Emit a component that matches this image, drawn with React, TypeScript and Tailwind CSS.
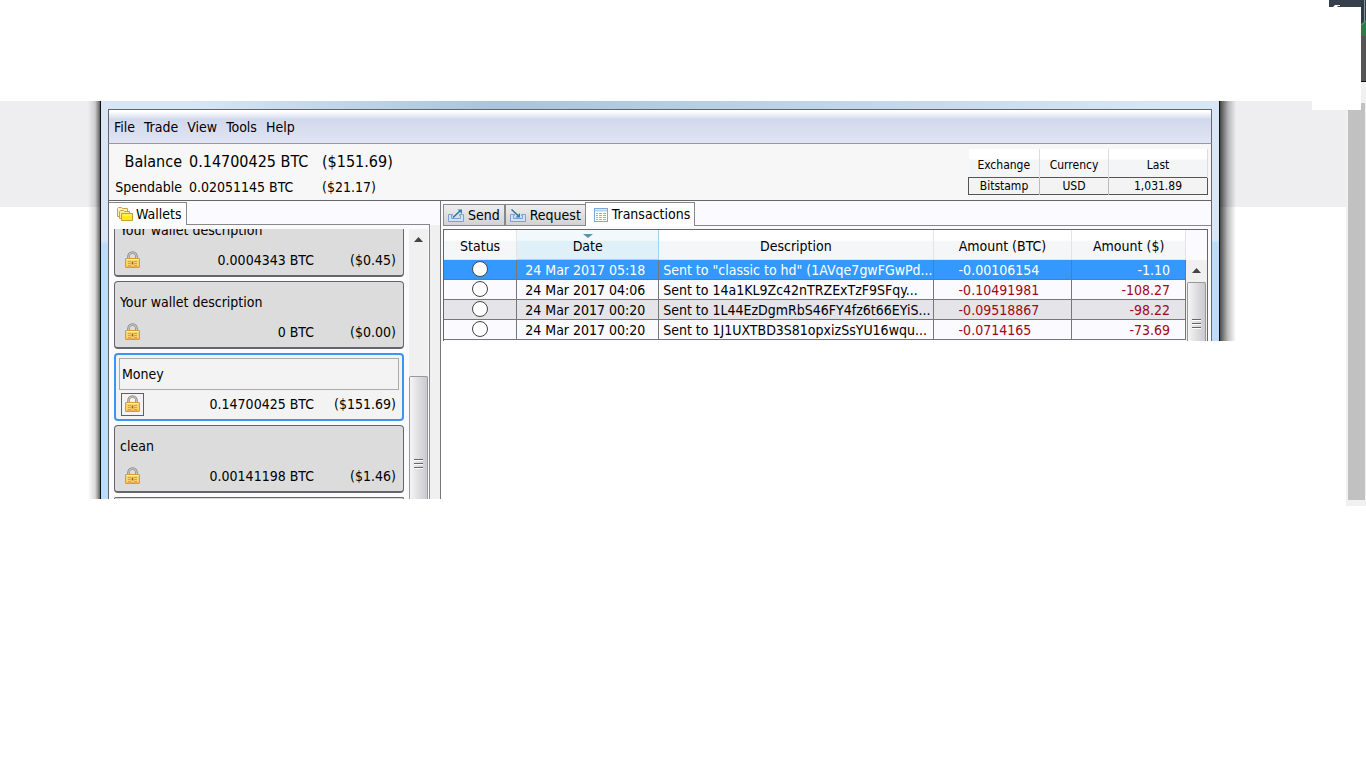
import type { ReactNode } from "react";

const menus = ["File", "Trade", "View", "Tools", "Help"];

const transactions = [
  { date: "24 Mar 2017 05:18", text: 'Sent to "classic to hd" (1AVqe7gwFGwPd...', btc: "-0.00106154", usd: "-1.10" },
  { date: "24 Mar 2017 04:06", text: "Sent to 14a1KL9Zc42nTRZExTzF9SFqy...", btc: "-0.10491981", usd: "-108.27" },
  { date: "24 Mar 2017 00:20", text: "Sent to 1L44EzDgmRbS46FY4fz6t66EYiS...", btc: "-0.09518867", usd: "-98.22" },
  { date: "24 Mar 2017 00:20", text: "Sent to 1J1UXTBD3S81opxizSsYU16wqu...", btc: "-0.0714165", usd: "-73.69" },
];

function LockIcon() {
  return (
    <svg width="16" height="18" viewBox="0 0 16 18" className="shrink-0">
      <path d="M3.500 9V5.500a4 4 0 0 1 8 0V9" fill="none" stroke="#8d8d8d" strokeWidth="2.600" />
      <path d="M3.500 9V5.500a4 4 0 0 1 8 0V9" fill="none" stroke="#cdcdcd" strokeWidth="1" />
      <rect x=".5" y="7.500" width="14" height="9" rx=".5" fill="#f8d272" stroke="#d99a3a" />
      <path d="M1.500 8.500h12" stroke="#fdf0b8" />
      <path d="M1.500 15.500h12" stroke="#f3b04a" />
      <path d="M3 10.500h3M9 10.500h3M3 12.500h3M9 12.500h3M3 14.500h3M9 14.500h3" stroke="#e79c34" />
      <path d="M7.500 10.500v3" stroke="#a8641c" strokeWidth="1.600" />
    </svg>
  );
}

function WalletsIcon() {
  return (
    <svg width="16" height="14" viewBox="0 0 16 14" className="shrink-0">
      <path d="M.5 9.500V1.500l1-1h3l1 1h5v8z" fill="#fdf3c4" stroke="#c9a04a" />
      <path d="M2.500 11.500V4.500l1-1h3l1 1h5v7z" fill="#fbeb9b" stroke="#c9a04a" />
      <path d="M4.500 13.500V6.500h11v7z" fill="#ffea1e" stroke="#cf9f20" />
      <path d="M5.500 8h9" stroke="#fff79a" />
    </svg>
  );
}

function SendIcon() {
  return (
    <svg width="16" height="13" viewBox="0 0 16 13" className="shrink-0">
      <path d="M.5 5.500h4v1h-1v3h9v-3h-1v-1h4v7H.5z" fill="#d3e2f5" stroke="#7f9fd2" />
      <path d="M5 8.500 12 2" stroke="#2a6f9e" strokeWidth="1.400" />
      <path d="M9.500 .5H14V5z" fill="#2a86ac" />
    </svg>
  );
}

function RequestIcon() {
  return (
    <svg width="16" height="13" viewBox="0 0 16 13" className="shrink-0">
      <path d="M.5 5.500h4v1h-1v3h9v-3h-1v-1h4v7H.5z" fill="#d3e2f5" stroke="#7f9fd2" />
      <path d="M1.500 .5l7 6.500" stroke="#2a6f9e" strokeWidth="1.400" />
      <path d="M10 4v4.500H5.500z" fill="#2a86ac" />
    </svg>
  );
}

function TransactionsIcon() {
  return (
    <svg width="14" height="14" viewBox="0 0 14 14" className="shrink-0">
      <rect x=".5" y=".5" width="13" height="13" fill="#fff" stroke="#7fa6dc" />
      <path d="M1 2.500h12" stroke="#b5cff0" strokeWidth="2" />
      <path d="M2 5.500h2M5 5.500h3M9 5.500h3M2 7.500h2M5 7.500h3M9 7.500h3M2 9.500h2M5 9.500h3M9 9.500h3M2 11.500h2M5 11.500h3M9 11.500h3" stroke="#8fb4e3" />
    </svg>
  );
}

function ScrollUp() {
  return (
    <button aria-label="Scroll up" className="flex h-5 w-full items-center justify-center">
      <svg width="9" height="5" viewBox="0 0 9 5">
        <path d="M4.500 0 9 5H0z" fill="#444" />
      </svg>
    </button>
  );
}

function Grip() {
  return (
    <svg width="9" height="10" viewBox="0 0 9 10">
      <path d="M0 .5h9M0 4.500h9M0 8.500h9" stroke="#666" />
      <path d="M0 1.500h9M0 5.500h9M0 9.500h9" stroke="#fff" />
    </svg>
  );
}

function Amounts({ btc, usd, children }: { btc: string; usd: string; children: ReactNode }) {
  return (
    <div className="mt-3 flex h-5 items-center">
      {children}
      <span className="flex-1 text-right">{btc} BTC</span>
      <span className="w-[82px] text-right">{usd}</span>
    </div>
  );
}

function WalletCard({ name, btc, usd }: { name: string; btc: string; usd: string }) {
  return (
    <div className="h-[68px] shrink-0 rounded-[4px] border border-b-2 border-[#666] bg-[#dcdcdc] pt-3 pr-[7px] pl-[5px]">
      <div className="h-4 leading-4">{name}</div>
      <Amounts btc={btc} usd={usd}>
        <span className="ml-[5px]">
          <LockIcon />
        </span>
      </Amounts>
    </div>
  );
}

function SidePanel() {
  return (
    <section className="flex h-[298px] w-[332px] shrink-0 flex-col border-r border-[#777] bg-[#fbfaff]">
      <div className="flex h-6 shrink-0 items-end pt-px">
        <button className="flex h-full items-center gap-[3px] border border-b-0 border-l-0 border-[#888] bg-white pr-1 pl-2 whitespace-nowrap">
          <WalletsIcon />
          Wallets
        </button>
        <div className="mr-[10px] h-px flex-1 bg-[#888]" />
      </div>
      <div className="flex min-h-0 flex-1">
        <div className="mt-1 flex min-w-0 flex-1 flex-col justify-end gap-1 overflow-hidden pl-[5px]">
          <WalletCard name="Your wallet description" btc="0.0004343" usd="($0.45)" />
          <WalletCard name="Your wallet description" btc="0" usd="($0.00)" />
          <div className="h-[68px] shrink-0 rounded-[4px] border-2 border-[#3d95f0] bg-[#f3f3f3] px-[3px] pt-[3px]">
            <input
              aria-label="Wallet description"
              defaultValue="Money"
              className="block h-8 w-full border border-[#aaa] bg-[#f3f3f3] pl-0.5"
            />
            <div className="mt-0.5 flex h-6 items-center pr-[3px] pl-0.5">
              <button aria-label="Lock wallet" className="flex size-[23px] items-center justify-center border border-[#2f6ba8] bg-[#f3f3f3]">
                <LockIcon />
              </button>
              <span className="flex-1 text-right">0.14700425 BTC</span>
              <span className="w-[82px] text-right">($151.69)</span>
            </div>
          </div>
          <WalletCard name="clean" btc="0.00141198" usd="($1.46)" />
          <div className="h-0.5 shrink-0 rounded-t-[4px] border border-b-0 border-[#666] bg-[#dcdcdc]" />
        </div>
        <div className="mt-1 ml-[5px] flex w-[19px] flex-col bg-[#f0f0f0]">
          <ScrollUp />
          <div className="mt-auto flex h-[123px] flex-col items-center rounded-t-[2px] border border-b-0 border-[#999] bg-linear-to-r from-[#f5f5f5] to-[#c9c9cf] pt-[82px]">
            <Grip />
          </div>
        </div>
        <div className="w-[2px] border-r border-[#888]" />
        <div className="w-[10px] bg-[#f0f0f0]" />
      </div>
    </section>
  );
}

function TransactionsPanel() {
  const head =
    "h-[29px] border-r border-b border-[#e2e4e6] bg-linear-to-b from-white from-35% to-[#f4f6f8] to-40% p-0 pt-1 text-center font-normal";
  const cell = "border-r border-[#777] p-0 pt-0.5 leading-4 whitespace-nowrap";
  return (
    <section className="flex h-[140px] min-w-0 flex-1 flex-col border-r border-[#666] bg-[#fbfaff] pl-0.5">
      <div className="flex h-[25px] shrink-0 items-end border-b border-[#888]">
        <button className="flex h-[21px] items-center gap-1 border border-b-0 border-[#888] bg-linear-to-b from-[#eee] to-[#d2d2d4] px-1 pt-px">
          <SendIcon />
          Send
        </button>
        <button className="flex h-[21px] items-center gap-1 border-t border-l border-[#888] bg-linear-to-b from-[#eee] to-[#d2d2d4] px-1 pt-px">
          <RequestIcon />
          Request
        </button>
        <button className="-mb-px flex h-6 items-center gap-1 border border-b-0 border-[#888] bg-white pr-1 pl-2">
          <TransactionsIcon />
          Transactions
        </button>
      </div>
      <div className="mt-[3px] mr-[3px] flex min-h-0 flex-1 overflow-hidden border-t border-l border-[#666]">
        <table className="min-w-0 flex-1 table-fixed border-collapse self-start">
          <colgroup>
            <col className="w-[73px]" />
            <col className="w-[142px]" />
            <col />
            <col className="w-[139px]" />
            <col className="w-[114px]" />
          </colgroup>
          <thead>
            <tr>
              <th className={head}>Status</th>
              <th className="relative h-[29px] border-x border-b border-[#9fd4ea] bg-linear-to-b from-[#f2f9fc] from-35% to-[#dff0f8] to-40% p-0 pt-1 text-center font-normal">
                <svg width="10" height="4" viewBox="0 0 10 4" className="absolute top-1 left-1/2 -translate-x-1/2">
                  <path d="M0 0h10L5 4z" fill="#5b93ad" />
                </svg>
                Date
              </th>
              <th className={head}>Description</th>
              <th className={head}>Amount (BTC)</th>
              <th className={head}>Amount ($)</th>
            </tr>
          </thead>
          <tbody>
            {transactions.map((tx, i) => {
              const red = i === 0 ? "" : "text-[#a00814]";
              return (
                <tr
                  key={tx.btc}
                  className={
                    i === 0
                      ? "h-5 border-b border-[#777] bg-[#3399ff] text-white"
                      : i === 2
                        ? "h-5 border-b border-[#777] bg-[#e4e4e9]"
                        : "h-5 border-b border-[#777] bg-[#fbfaff]"
                  }
                >
                  <td className="border-r border-[#777] p-0">
                    <svg width="16" height="16" viewBox="0 0 16 16" className="mx-auto block">
                      <circle cx="8" cy="8" r="7.500" fill="#fff" stroke="#444" />
                    </svg>
                  </td>
                  <td className={`${cell} pl-2`}>{tx.date}</td>
                  <td className={`${cell} overflow-hidden pl-1`}>{tx.text}</td>
                  <td className={`${cell} pl-[25px] ${red}`}>{tx.btc}</td>
                  <td className={`${cell} pr-[15px] text-right ${red}`}>{tx.usd}</td>
                </tr>
              );
            })}
          </tbody>
        </table>
        <div className="flex w-[22px] shrink-0 flex-col border-r border-[#666] pt-[30px]">
          <div className="flex flex-1 flex-col bg-[#f0f0f0] pr-px">
            <ScrollUp />
            <div className="mt-0.5 ml-px flex flex-1 flex-col items-center rounded-t-[2px] border border-b-0 border-[#999] bg-linear-to-r from-[#f5f5f5] to-[#c9c9cf] pt-9">
              <Grip />
            </div>
          </div>
        </div>
      </div>
    </section>
  );
}

function ExchangeTable() {
  const head = "h-[28px] border-r border-[#ddd] p-0 pt-1 font-normal";
  return (
    <table className="mt-[5px] mr-[3px] h-[45px] w-[240px] table-fixed border-collapse self-start text-[12px]">
      <colgroup>
        <col className="w-[71px]" />
        <col className="w-[69px]" />
        <col />
      </colgroup>
      <thead>
        <tr className="bg-linear-to-b from-white from-35% to-[#f4f5f6] to-40%">
          <th className={head}>Exchange</th>
          <th className={head}>Currency</th>
          <th className={head}>Last</th>
        </tr>
      </thead>
      <tbody>
        <tr className="border border-[#555] bg-[#f3f3f3] text-center leading-4">
          <td className="border-r border-[#bbb] p-0">Bitstamp</td>
          <td className="border-r border-[#bbb] p-0">USD</td>
          <td className="p-0">1,031.89</td>
        </tr>
      </tbody>
    </table>
  );
}

export default function App() {
  return (
    <div className="relative flex min-h-screen items-start bg-white pt-[101px] font-['DejaVu_Sans_Condensed','DejaVu_Sans',sans-serif] text-[14px] text-black">
      <div className="flex min-w-0 flex-1 items-start bg-linear-to-b from-[#eeeef0] to-[#eeeef0] bg-size-[100%_106px] bg-no-repeat pr-[110px] pl-[88px]">
        {/* left window edge with its shadow */}
        <div className="flex h-[398px] w-5 shrink-0">
          <div className="w-3 bg-linear-to-r from-black/0 via-black/15 via-60% to-black/60" />
          <div className="w-px bg-[#111]" />
          <div className="w-[7px] bg-linear-to-b from-[#d8e6f5] from-35% to-[#bddcfc] to-36%" />
        </div>

        <main className="min-w-0 flex-1">
          <div className="h-2 bg-linear-to-r from-[#d6e6f5] from-8% via-[#a9c4dc] via-35% to-[#d6e6f5] to-95%" />
          <nav className="flex h-[35px] items-center gap-[9px] border border-[#666] border-b-[#999] bg-linear-to-b from-white from-5% via-[#d3d9ec] via-28% to-[#e0e4f4] pt-0.5 pl-[5px]">
            {menus.map((menu) => (
              <button key={menu}>{menu}</button>
            ))}
          </nav>
          <header className="flex h-[57px] justify-between border-x border-b border-[#666] bg-[#f7f7f7]">
            <div className="grid grid-cols-[73px_132px_auto] content-start gap-x-1 pt-2">
              <span className="text-right text-[16px] leading-5">Balance</span>
              <span className="pl-[3px] text-[16px] leading-5">0.14700425 BTC</span>
              <span className="text-[16px] leading-5">($151.69)</span>
              <span className="pt-1 text-right leading-[22px]">Spendable</span>
              <span className="pt-1 pl-[3px] leading-[22px]">0.02051145 BTC</span>
              <span className="pt-1 leading-[22px]">($21.17)</span>
            </div>
            <ExchangeTable />
          </header>
          <div className="flex items-start">
            <div className="border-l border-[#666]">
              <SidePanel />
            </div>
            <TransactionsPanel />
          </div>
        </main>

        <div className="flex h-[240px] w-6 shrink-0">
          <div className="w-[7px] bg-linear-to-b from-[#d8e6f5] from-58% to-[#bddcfc] to-59%" />
          <div className="w-px bg-[#111]" />
          <div className="flex-1 bg-linear-to-r from-black/70 via-black/25 via-50% to-black/0" />
        </div>
      </div>

      <div className="h-[405px] w-5 shrink-0 bg-[#f1f1f1] pt-0.5 pl-0.5">
        <div className="h-[397px] w-[17px] bg-[#c1c1c1]" />
      </div>

      {/* page corner showing behind the window */}
      <svg width="54" height="110" viewBox="0 0 54 110" className="absolute top-0 right-0">
        <path d="M0 82h34V0h20v82h-5v28H0z" fill="#fff" />
        <path d="M17 0h37v7H17z" fill="#36404c" />
        <path d="M49 0h5v36h-5z" fill="#2f3b45" />
        <path d="M49 24l5-4v16h-5z" fill="#2f7a45" />
        <path d="M52.500 0v22l-3 3" fill="none" stroke="#8a939c" />
        <path d="M49 36h5v46h-5z" fill="#555" />
        <path d="M49 81h5v1h-5z" fill="#111" />
        <path d="M49 82h5v21h-5z" fill="#f1f1f1" />
        <path d="M21 7l2-2h5v1h-2l-1 1z" fill="#fff" />
      </svg>
    </div>
  );
}
